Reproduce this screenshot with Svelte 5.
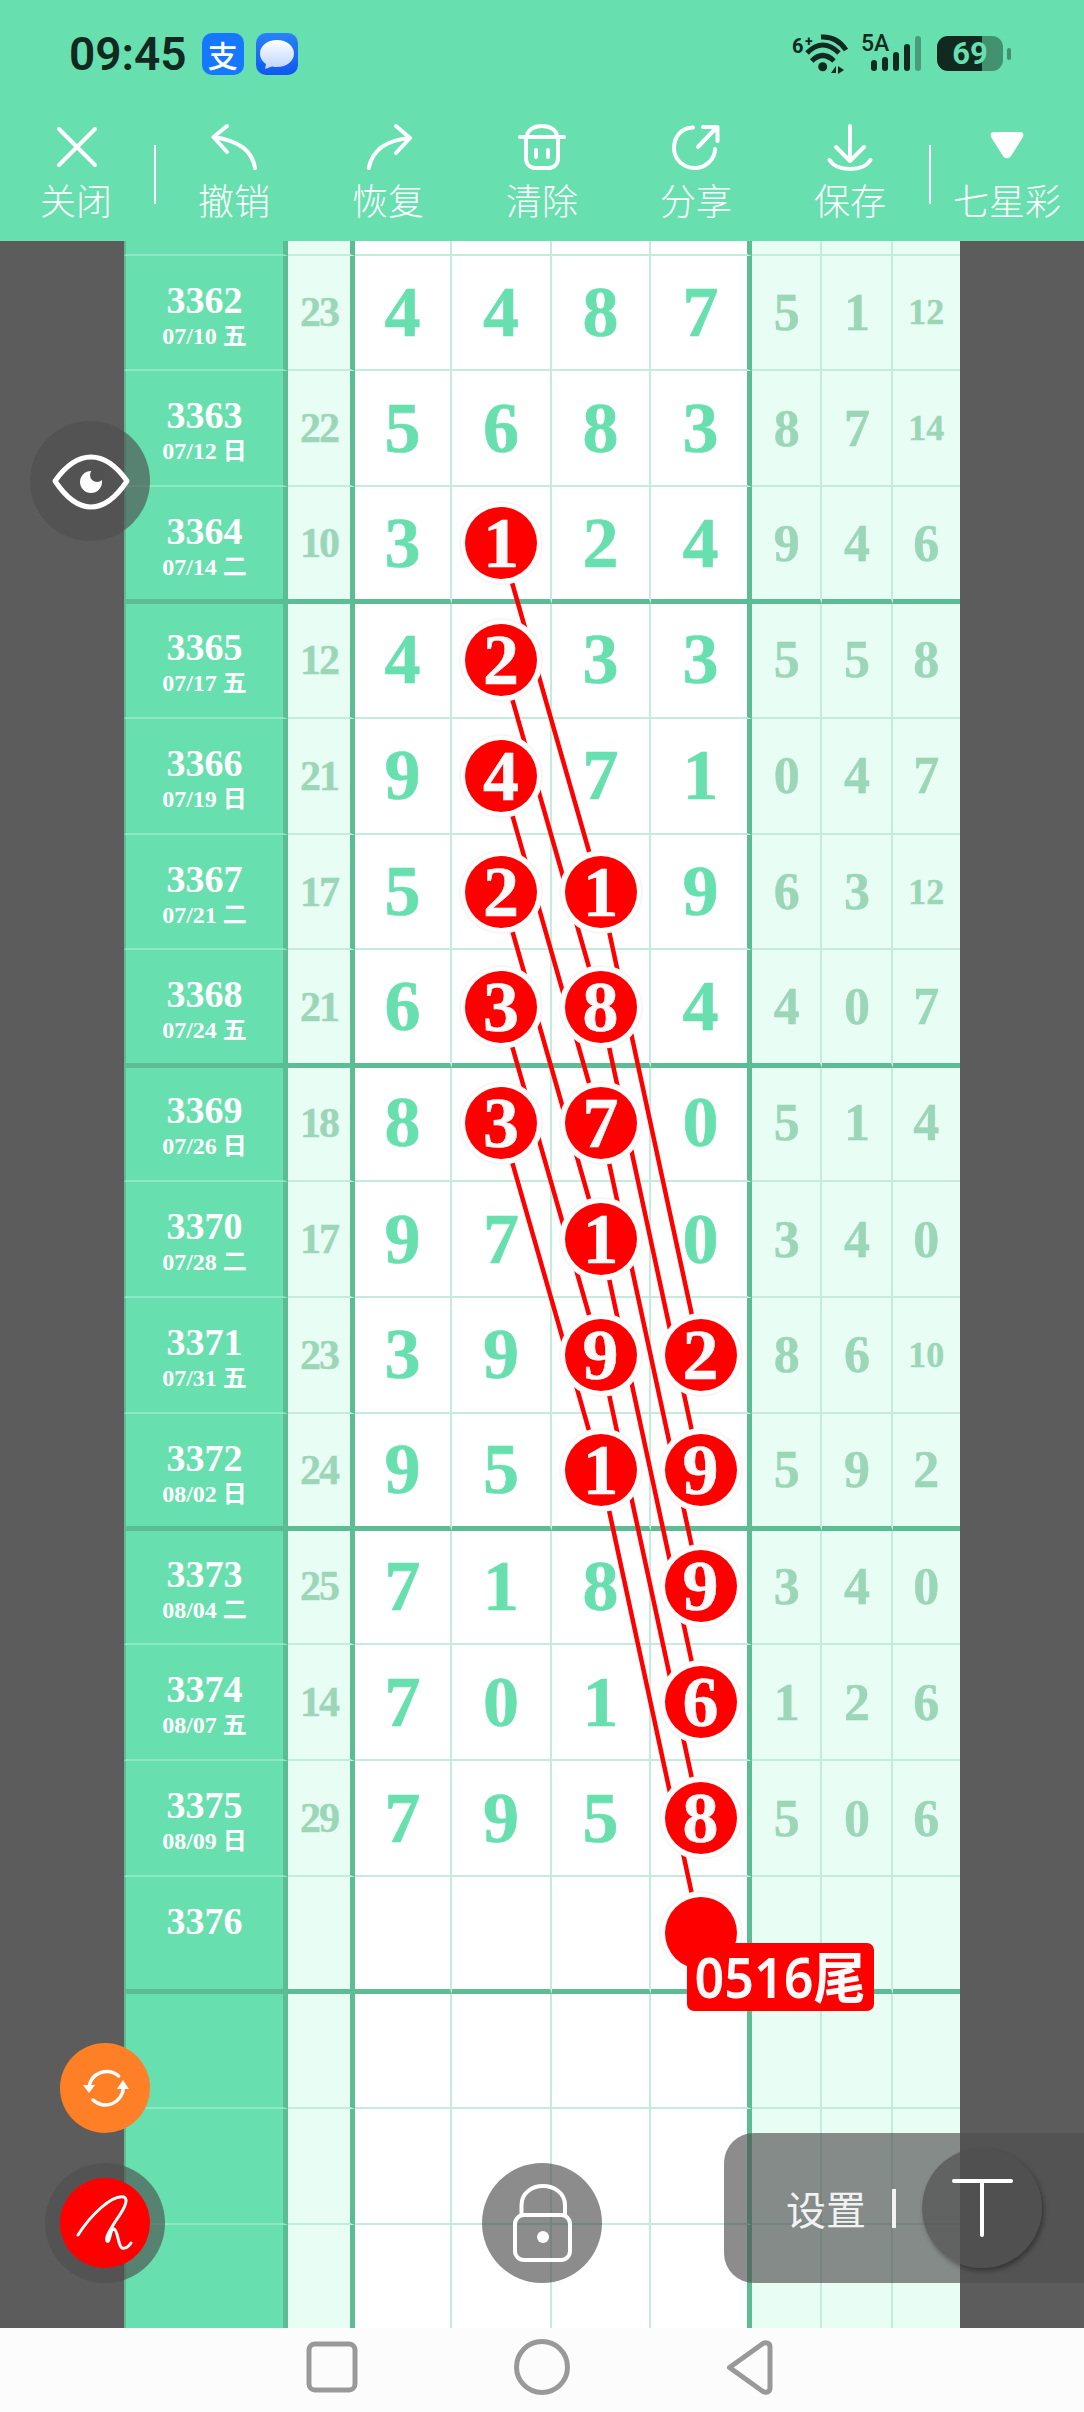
<script>
  // 七星彩 trend chart, one entry per draw
  const rows = [
    { id: 3362, date: '07/10 五', sum: 23, main: [4, 4, 8, 7], tail: [5, 1, 12], hit: [] },
    { id: 3363, date: '07/12 日', sum: 22, main: [5, 6, 8, 3], tail: [8, 7, 14], hit: [] },
    { id: 3364, date: '07/14 二', sum: 10, main: [3, 1, 2, 4], tail: [9, 4, 6], hit: [1], thick: true },
    { id: 3365, date: '07/17 五', sum: 12, main: [4, 2, 3, 3], tail: [5, 5, 8], hit: [1] },
    { id: 3366, date: '07/19 日', sum: 21, main: [9, 4, 7, 1], tail: [0, 4, 7], hit: [1] },
    { id: 3367, date: '07/21 二', sum: 17, main: [5, 2, 1, 9], tail: [6, 3, 12], hit: [1, 2] },
    { id: 3368, date: '07/24 五', sum: 21, main: [6, 3, 8, 4], tail: [4, 0, 7], hit: [1, 2], thick: true },
    { id: 3369, date: '07/26 日', sum: 18, main: [8, 3, 7, 0], tail: [5, 1, 4], hit: [1, 2] },
    { id: 3370, date: '07/28 二', sum: 17, main: [9, 7, 1, 0], tail: [3, 4, 0], hit: [2] },
    { id: 3371, date: '07/31 五', sum: 23, main: [3, 9, 9, 2], tail: [8, 6, 10], hit: [2, 3] },
    { id: 3372, date: '08/02 日', sum: 24, main: [9, 5, 1, 9], tail: [5, 9, 2], hit: [2, 3], thick: true },
    { id: 3373, date: '08/04 二', sum: 25, main: [7, 1, 8, 9], tail: [3, 4, 0], hit: [3] },
    { id: 3374, date: '08/07 五', sum: 14, main: [7, 0, 1, 6], tail: [1, 2, 6], hit: [3] },
    { id: 3375, date: '08/09 日', sum: 29, main: [7, 9, 5, 8], tail: [5, 0, 6], hit: [3] },
    { id: 3376, date: '', sum: '', main: ['', '', '', ''], tail: ['', '', ''], hit: [3], thick: true },
    { id: '', date: '', sum: '', main: ['', '', '', ''], tail: ['', '', ''], hit: [] },
    { id: '', date: '', sum: '', main: ['', '', '', ''], tail: ['', '', ''], hit: [] },
    { id: '', date: '', sum: '', main: ['', '', '', ''], tail: ['', '', ''], hit: [] }
  ];

  const tools = ['关闭', '撤销', '恢复', '清除', '分享', '保存'];

  // hand-drawn trend lines: [row, column] pairs
  const trends = [
    [[2, 1], [5, 2], [9, 3]],
    [[3, 1], [6, 2], [10, 3]],
    [[4, 1], [7, 2], [11, 3]],
    [[5, 1], [8, 2], [12, 3]],
    [[6, 1], [9, 2], [13, 3]],
    [[7, 1], [10, 2], [14, 3]]
  ];
  const rowH = 115.83;
  const colX = [402, 501, 600.5, 700.5];
  const trendPoints = trends.map((t) =>
    t.map(([r, c]) => `${colX[c]},${(14.5 + rowH * (r + 0.5) - 1).toFixed(1)}`).join(' ')
  );
</script>

<div class="page">
  <header>
    <div class="status">
      <div class="status-left">
        <span class="time">09:45</span>
        <span class="app alipay">支</span>
        <span class="app msg">
          <svg width="42" height="42" viewBox="0 0 42 42">
            <defs>
              <linearGradient id="bubble" x1="0" y1="0" x2="0" y2="1">
                <stop offset="0" stop-color="#ffffff" />
                <stop offset="1" stop-color="#bcd4fb" />
              </linearGradient>
            </defs>
            <path d="M21 7C11 7 4 13 4 20.500C4 25.500 7 29 10 31L9 36L16 33.500C18 34 19.500 34 21 34C31 34 38 28 38 20.500C38 13 31 7 21 7Z" fill="url(#bubble)" />
          </svg>
        </span>
      </div>
      <div class="status-right">
        <svg class="wifi" width="60" height="44" viewBox="0 0 60 44">
          <text x="1" y="20" class="mini">6</text>
          <text x="14" y="13" class="mini-plus">+</text>
          <g fill="none" stroke="#12291f" stroke-width="5">
            <path d="M30 4Q46 3 55 17" />
            <path d="M16 20Q31.700 4 48 20" />
            <path d="M20.700 28Q31.700 17 43 28" />
          </g>
          <circle cx="31.700" cy="33.700" r="4.500" fill="#12291f" />
          <path d="M40 40H45V33ZM47 33V41L53 37Z" fill="#12291f" />
        </svg>
        <div class="cell-signal">
          <span class="fiveg">5A</span>
          <span class="bar" style="height:11px"></span>
          <span class="bar" style="height:14px"></span>
          <span class="bar" style="height:19px"></span>
          <span class="bar" style="height:27px"></span>
          <span class="bar off" style="height:35px"></span>
        </div>
        <div class="battery">69</div>
        <span class="nub"></span>
      </div>
    </div>

    <div class="toolbar">
      {#each tools as label, i}
        {#if i === 1}<span class="divider"></span>{/if}
        <div class="tool" class:first={i === 0}>
          <svg width="60" height="48" viewBox="0 0 60 48" fill="none" stroke="#fff" stroke-width="4" stroke-linecap="round" stroke-linejoin="round">
            {#if i === 0}
              <path d="M13 6L49 42M49 6L13 42" />
            {:else if i === 1}
              <path d="M23 3L9.500 14L23 29M9.500 14C36 18 48 28 51 45" />
            {:else if i === 2}
              <path d="M38 3L52 15L38 30M52 15C30 17 15 25 10.700 45" />
            {:else if i === 3}
              <path d="M8 14H52M15 14C15 7 22 3 30 3C38 3 45 7 45 14M14 14V35C14 41 18 45 24 45H36C42 45 46 41 46 35V14M24 27V34M36 27V34" />
            {:else if i === 4}
              <path d="M27 4.500C14 5 8 15 8 25C8 36 17 45 28.500 45C40 45 49 36 49 26M32 24L51 4M37 4H51.500V18" />
            {:else}
              <path d="M30 3V37M16 24L30 38L44 24M9.500 37C13 43 21 46 30 46C39 46 47 43 50.500 37" />
            {/if}
          </svg>
          <span>{label}</span>
        </div>
      {/each}
      <span class="divider"></span>
      <div class="tool last">
        <svg width="60" height="48" viewBox="0 0 60 48">
          <path d="M17 9H43C46 9 47 11 46 14L34 33C32 36 28 36 26 33L14 14C13 11 14 9 17 9Z" fill="#fff" />
        </svg>
        <span>七星彩</span>
      </div>
    </div>
  </header>

  <main class="board">
    <div class="table">
      <div class="row top">
        <div class="cell name"></div>
        <div class="cell sum"></div>
        {#each [0, 1, 2, 3] as c}<div class="cell num" class:edge={c === 3}></div>{/each}
        {#each [0, 1, 2] as c}<div class="cell tail"></div>{/each}
      </div>
      {#each rows as row}
        <div class="row" class:thick={row.thick}>
          <div class="cell name">
            <div class="id">{row.id}</div>
            <div class="date">{row.date}</div>
          </div>
          <div class="cell sum">{row.sum}</div>
          {#each row.main as n, c}
            <div class="cell num" class:edge={c === 3}>
              {#if row.hit.includes(c)}
                <span class="ball">{n}</span>
              {:else}
                {n}
              {/if}
            </div>
          {/each}
          {#each row.tail as n}
            <div class="cell tail" class:small={n >= 10}>{n}</div>
          {/each}
        </div>
      {/each}
    </div>
    <svg class="trend" width="1084" height="2087" viewBox="0 0 1084 2087">
      {#each trendPoints as points}
        <polyline {points} fill="none" stroke="#f00" stroke-width="4.500" />
      {/each}
    </svg>
  </main>

  <nav>
    <svg width="52" height="52" viewBox="0 0 52 52"><rect x="3" y="3" width="46" height="46" rx="6" fill="none" stroke="#999" stroke-width="5" /></svg>
    <svg width="56" height="56" viewBox="0 0 56 56"><circle cx="28" cy="28" r="25.500" fill="none" stroke="#999" stroke-width="5" /></svg>
    <svg width="47" height="57" viewBox="0 0 47 57"><path d="M3.500 28.500L37 4.500C40 3 44 4 44 8V49C44 53 40 54 37 52.500Z" fill="none" stroke="#999" stroke-width="5" stroke-linejoin="round" /></svg>
  </nav>

  <div class="tag"><span>0516尾</span></div>

  <div class="float eye">
    <svg width="120" height="120" viewBox="0 0 120 120">
      <path d="M25 60C37 43 48 36 61 36C74 36 85 43 97 60C85 78 74 86 61 86C48 86 37 78 25 60Z" fill="none" stroke="#fff" stroke-width="5" stroke-linejoin="round" />
      <circle cx="61" cy="61" r="11" fill="#fff" />
      <circle cx="67" cy="54" r="7" fill="#515151" />
    </svg>
  </div>

  <div class="float refresh">
    <svg width="50" height="44" viewBox="0 0 50 44" fill="none" stroke="#fff" stroke-width="3.500" stroke-linecap="round">
      <path d="M38.600 10A18 18 0 0 0 9 21M13 34A18 18 0 0 0 43.400 21" />
      <path d="M3 19H15L9 27ZM37 23H49L43 14Z" fill="#fff" stroke="none" />
    </svg>
  </div>

  <div class="float pen">
    <div class="pen-red">
      <svg width="90" height="90" viewBox="0 0 90 90" fill="none" stroke="#fff" stroke-width="3" stroke-linecap="round">
        <path d="M18 57C30 38 52 16 64 19C70 22 62 34 55 44C50 52 45 60 47 63C50 66 50 50 54 51C58 52 58 68 62 70C66 71 69 68 71 65" />
      </svg>
    </div>
  </div>

  <div class="float lock">
    <svg width="120" height="120" viewBox="0 0 120 120" fill="none" stroke="#fff" stroke-width="4">
      <path d="M39.500 52V42C39.500 30 50 23 61 23C72 23 83 30 83 42V52" />
      <rect x="33" y="52" width="55" height="45" rx="9" />
      <circle cx="61" cy="74" r="6" fill="#fff" stroke="none" />
    </svg>
  </div>

  <div class="settings">
    <span class="settings-label">设置</span>
    <span class="settings-bar"></span>
    <div class="t-btn">
      <svg width="120" height="120" viewBox="0 0 120 120" fill="none" stroke="#fff" stroke-width="4" stroke-linecap="round">
        <path d="M32 33H89M60 33V87" />
      </svg>
    </div>
  </div>
</div>

<style>
  :global(body) {
    margin: 0;
    background: #5c5c5c;
  }

  .page {
    position: relative;
    width: 1084px;
    height: 2412px;
    display: flex;
    flex-direction: column;
    overflow: hidden;
    font-family: "Noto Sans CJK SC", "Noto Sans", sans-serif;
  }

  header {
    flex: 0 0 241px;
    background: #68dfaf;
    box-sizing: border-box;
    padding-top: 33px;
  }

  .status {
    display: flex;
    justify-content: space-between;
    height: 90px;
    padding: 0 73px 0 69px;
  }

  .status-left {
    display: flex;
    align-items: flex-start;
  }

  .time {
    font-family: Roboto, sans-serif;
    font-weight: 600;
    font-size: 46px;
    line-height: 42px;
    color: #12291f;
    margin-right: 15px;
  }

  .app {
    width: 42px;
    height: 42px;
    border-radius: 10px;
    display: flex;
    align-items: center;
    justify-content: center;
    margin-right: 12px;
    background: #1677ff;
  }

  .alipay {
    color: #fff;
    font-size: 30px;
    line-height: 42px;
    font-weight: 500;
  }

  .msg {
    background: linear-gradient(#2a82f8, #0e58ef);
  }

  .status-right {
    position: relative;
    display: flex;
    align-items: flex-start;
    padding-top: 3px;
  }

  .wifi {
    margin-right: 10px;
    margin-top: -3px;
  }

  .mini {
    font: 700 20px Roboto, sans-serif;
    fill: #12291f;
  }

  .mini-plus {
    font: 700 14px Roboto, sans-serif;
    fill: #12291f;
  }

  .cell-signal {
    position: relative;
    display: flex;
    align-items: flex-end;
    gap: 5px;
    height: 35px;
    padding-left: 10px;
    margin-right: 15px;
    width: 51px;
  }

  .fiveg {
    position: absolute;
    left: 0;
    top: -4px;
    font: 500 23px/24px Roboto, sans-serif;
    color: #12291f;
  }

  .bar {
    width: 6px;
    border-radius: 3px;
    background: #12291f;
    flex: none;
  }

  .bar.off {
    background: #4b9c7c;
  }

  .battery {
    width: 66px;
    height: 35px;
    border-radius: 11px;
    background: linear-gradient(90deg, #12291f 45px, #42916f 45px);
    text-align: center;
    font: 700 31px/36px Roboto, sans-serif;
    color: #68dfaf;
  }

  .nub {
    width: 4px;
    height: 12px;
    margin: 12px 0 0 4px;
    border-radius: 2px;
    background: #42916f;
  }

  .toolbar {
    display: flex;
    align-items: flex-start;
  }

  .tool {
    flex: 0 0 154px;
    display: flex;
    flex-direction: column;
    align-items: center;
    color: #fff;
    font-size: 36px;
    font-weight: 300;
    line-height: 40px;
  }

  .tool.first {
    flex-basis: 152px;
  }

  .tool svg {
    display: block;
    margin-bottom: 8px;
  }

  .divider {
    flex: 0 0 2px;
    height: 59px;
    margin: 22px 3px 0 2px;
    background: #fff;
  }

  .divider + .tool {
    margin-left: -2px;
  }

  .divider + .tool.last {
    margin-left: -4px;
  }

  .board {
    position: relative;
    flex: 1;
    overflow: hidden;
    background: #5c5c5c;
  }

  .table {
    margin-left: 124px;
    width: 836px;
  }

  .row {
    display: grid;
    grid-template-columns: 164px 67px 97px 100px 99px 101px 69.5px 71px 67.5px;
    height: 115.83px;
  }

  .row.top {
    height: 14.5px;
  }

  .row.thick {
    height: 117.33px;
  }

  .row.thick + .row {
    height: 114.33px;
  }

  .row.thick .cell {
    border-bottom: 5px solid #5cbd95;
  }

  .row.thick + .row .cell {
    padding-bottom: 2px;
  }

  .row.thick + .row .name {
    padding-top: 23.5px;
    padding-bottom: 0;
  }

  .cell {
    box-sizing: border-box;
    min-height: 0;
    display: flex;
    align-items: center;
    justify-content: center;
    font-family: "Liberation Serif", "Noto Sans CJK SC", serif;
    font-weight: 700;
    border-bottom: 2px solid #c3ecdc;
  }

  .name {
    display: block;
    text-align: center;
    background: #68dfaf;
    color: #fff;
    padding-top: 25px;
    border-left: 2px solid #5cbd95;
    border-right: 5px solid #5cbd95;
    border-bottom-color: #8ee8c6;
  }

  .top .name {
    padding-top: 0;
  }

  .id {
    font-size: 38px;
    line-height: 38px;
  }

  .date {
    font-size: 24px;
    line-height: 34px;
  }

  .sum {
    background: #e8fdf4;
    color: #9bd6b8;
    font-size: 42px;
    letter-spacing: -2px;
    border-right: 5px solid #5cbd95;
    -webkit-text-stroke: 0.4px #9bd6b8;
  }

  .num {
    background: #fff;
    color: #68dfaf;
    font-size: 72px;
    border-right: 2px solid #c3ecdc;
    -webkit-text-stroke: 0.6px #68dfaf;
  }

  .num.edge {
    padding-left: 3px;
    border-right: 5px solid #5cbd95;
  }

  .tail {
    background: #e8fdf4;
    color: #9bd6b8;
    font-size: 52px;
    padding-left: 2px;
    border-right: 2px solid #c3ecdc;
    -webkit-text-stroke: 0.4px #9bd6b8;
  }

  .tail:last-child {
    padding-left: 0;
    border-right: 0;
  }

  .tail.small {
    font-size: 36px;
  }

  .ball {
    position: relative;
    z-index: 2;
    flex: none;
    width: 72px;
    height: 72px;
    line-height: 72px;
    border-radius: 50%;
    text-align: center;
    background: #f00;
    color: #fafafa;
    -webkit-text-stroke: 0.6px #fafafa;
    box-shadow: 0 0 0 4px #fff, 0 0 0 6px #f6f6f6;
  }

  .trend {
    position: absolute;
    left: 0;
    top: 0;
    z-index: 1;
  }

  nav {
    flex: 0 0 84px;
    box-sizing: border-box;
    display: flex;
    align-items: center;
    justify-content: center;
    gap: 156px;
    padding: 0 6px 6px 0;
    background: #fcfcfc;
  }

  .tag {
    position: absolute;
    left: 687px;
    top: 1943px;
    width: 187px;
    height: 68px;
    z-index: 3;
    display: flex;
    justify-content: center;
    border-radius: 7px;
    background: #f00;
    color: #fafafa;
    font-family: "Noto Sans", "Noto Sans CJK SC", sans-serif;
    font-weight: 600;
    font-size: 56px;
    line-height: 66px;
  }

  .tag span {
    flex: none;
    transform: scaleX(0.93);
  }

  .float {
    position: absolute;
    z-index: 4;
    width: 120px;
    height: 120px;
    border-radius: 50%;
    background: rgba(78, 78, 78, 0.65);
    display: flex;
    align-items: center;
    justify-content: center;
  }

  .eye {
    left: 30px;
    top: 421px;
  }

  .refresh {
    left: 60px;
    top: 2043px;
    width: 90px;
    height: 90px;
    background: #ff7f27;
  }

  .pen {
    left: 45px;
    top: 2163px;
  }

  .pen-red {
    width: 90px;
    height: 90px;
    border-radius: 50%;
    background: #f00;
  }

  .lock {
    left: 482px;
    top: 2163px;
  }

  .settings {
    position: absolute;
    z-index: 4;
    left: 724px;
    right: 0;
    top: 2133px;
    height: 150px;
    border-radius: 30px 0 0 30px;
    background: rgba(78, 78, 78, 0.65);
    display: flex;
    align-items: center;
    padding-left: 62px;
    color: #f2f2f2;
  }

  .settings-label {
    font-size: 40px;
    line-height: 50px;
    width: 80px;
  }

  .settings-bar {
    width: 4px;
    height: 39px;
    margin: 0 26px 0 26px;
    background: #f2f2f2;
  }

  .t-btn {
    flex: none;
    width: 120px;
    height: 120px;
    border-radius: 50%;
    background: rgba(78, 78, 78, 0.65);
    box-shadow: 2px 3px 5px rgba(0, 0, 0, 0.35);
  }

  .t-btn svg {
    display: block;
  }
</style>
